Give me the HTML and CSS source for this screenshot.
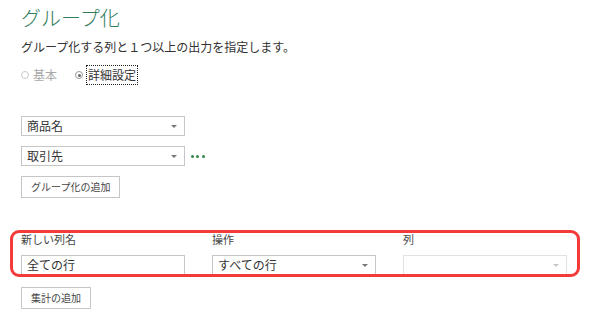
FILE: index.html
```html
<!DOCTYPE html>
<html lang="ja">
<head>
    <meta charset="UTF-8">
    <meta name="viewport" content="width=device-width, initial-scale=1.0">
    <title>グループ化</title>
    <link rel="stylesheet" href="styles.css">
</head>
<body>
    <div class="page">
        <h1 class="title">グループ化</h1>
        <p class="desc">グループ化する列と１つ以上の出力を指定します。</p>

        <div class="mode">
            <label class="radio disabled"><span class="circle"></span>基本</label>
            <label class="radio checked"><span class="circle"></span><span class="focus">詳細設定</span></label>
        </div>

        <div class="groups">
            <div class="row">
                <div class="dropdown">商品名<span class="caret"></span></div>
            </div>
            <div class="row">
                <div class="dropdown">取引先<span class="caret"></span></div>
                <div class="more"><span></span><span></span><span></span></div>
            </div>
            <button class="btn">グループ化の追加</button>
        </div>

        <div class="aggs">
            <div class="agg-grid">
                <div class="label">新しい列名</div>
                <div class="label">操作</div>
                <div class="label">列</div>
                <div class="textbox">全ての行</div>
                <div class="dropdown">すべての行<span class="caret"></span></div>
                <div class="dropdown disabled"><span class="caret"></span></div>
            </div>
            <div class="highlight"></div>
        </div>

        <button class="btn btn-agg">集計の追加</button>
    </div>
</body>
</html>
```

FILE: styles.css
```css
body {
    margin: 0;
    background-color: #fff;
    color: #333;
    font-family: "Noto Sans CJK JP", "Noto Sans", sans-serif;
    overflow: hidden;
}
.page {
    padding: 6px 0 0 21px;
}
.title {
    margin: 0;
    font-size: 20px;
    line-height: 24px;
    font-weight: 300;
    color: #2f7c5c;
}
.desc {
    margin: 9px 0 0;
    font-size: 12px;
    line-height: 16px;
}
.mode {
    display: flex;
    align-items: center;
    margin-top: 11px;
    font-size: 12px;
    line-height: 16px;
}
.radio {
    display: flex;
    align-items: center;
    margin-right: 18px;
}
.radio .circle {
    width: 8px;
    height: 8px;
    box-sizing: border-box;
    border: 1px solid #c8c8c8;
    border-radius: 50%;
    margin-right: 4px;
    position: relative;
}
.radio.disabled {
    color: #a8a8a8;
}
.radio.checked .circle {
    border-color: #9a9a9a;
}
.radio.checked .circle::after {
    content: "";
    position: absolute;
    left: 1.5px;
    top: 1.5px;
    width: 3px;
    height: 3px;
    border-radius: 50%;
    background-color: #666;
}
.focus {
    outline: 1px dotted #222;
    padding: 1px 1px;
}
.groups {
    margin-top: 32px;
}
.row {
    display: flex;
    align-items: center;
    margin-bottom: 10px;
}
.dropdown, .textbox {
    width: 164px;
    height: 20px;
    box-sizing: border-box;
    border: 1px solid #c6c6c6;
    padding: 0 7px 0 5px;
    font-size: 12px;
    line-height: 18px;
    color: #333;
    display: flex;
    align-items: center;
    justify-content: space-between;
    background-color: #fff;
}
.caret {
    width: 0;
    height: 0;
    margin-left: auto;
    border-left: 3px solid transparent;
    border-right: 3px solid transparent;
    border-top: 3px solid #777;
}
.dropdown.disabled {
    border-color: #e2e2e2;
}
.dropdown.disabled .caret {
    border-top-color: #c8c8c8;
}
.more {
    display: flex;
    gap: 2.4px;
    margin-left: 6px;
}
.more span {
    width: 3px;
    height: 3px;
    border-radius: 50%;
    background-color: #2f8a4a;
}
.btn {
    display: block;
    height: 22px;
    margin-top: 1px;
    padding: 0 9px;
    border: 1px solid #c6c6c6;
    background-color: #fff;
    color: #444;
    font-family: inherit;
    font-size: 10px;
    line-height: 20px;
}
.aggs {
    position: relative;
    margin-top: 34px;
}
.agg-grid {
    display: grid;
    grid-template-columns: 164px 164px 164px;
    column-gap: 27px;
    row-gap: 8px;
}
.label {
    font-size: 11px;
    line-height: 15px;
    color: #444;
}
.highlight {
    position: absolute;
    left: -11px;
    top: -2px;
    width: 570px;
    height: 47px;
    box-sizing: border-box;
    border: 3px solid #f53a3a;
    border-radius: 9px;
}
.btn-agg {
    margin-top: 12px;
}
```
